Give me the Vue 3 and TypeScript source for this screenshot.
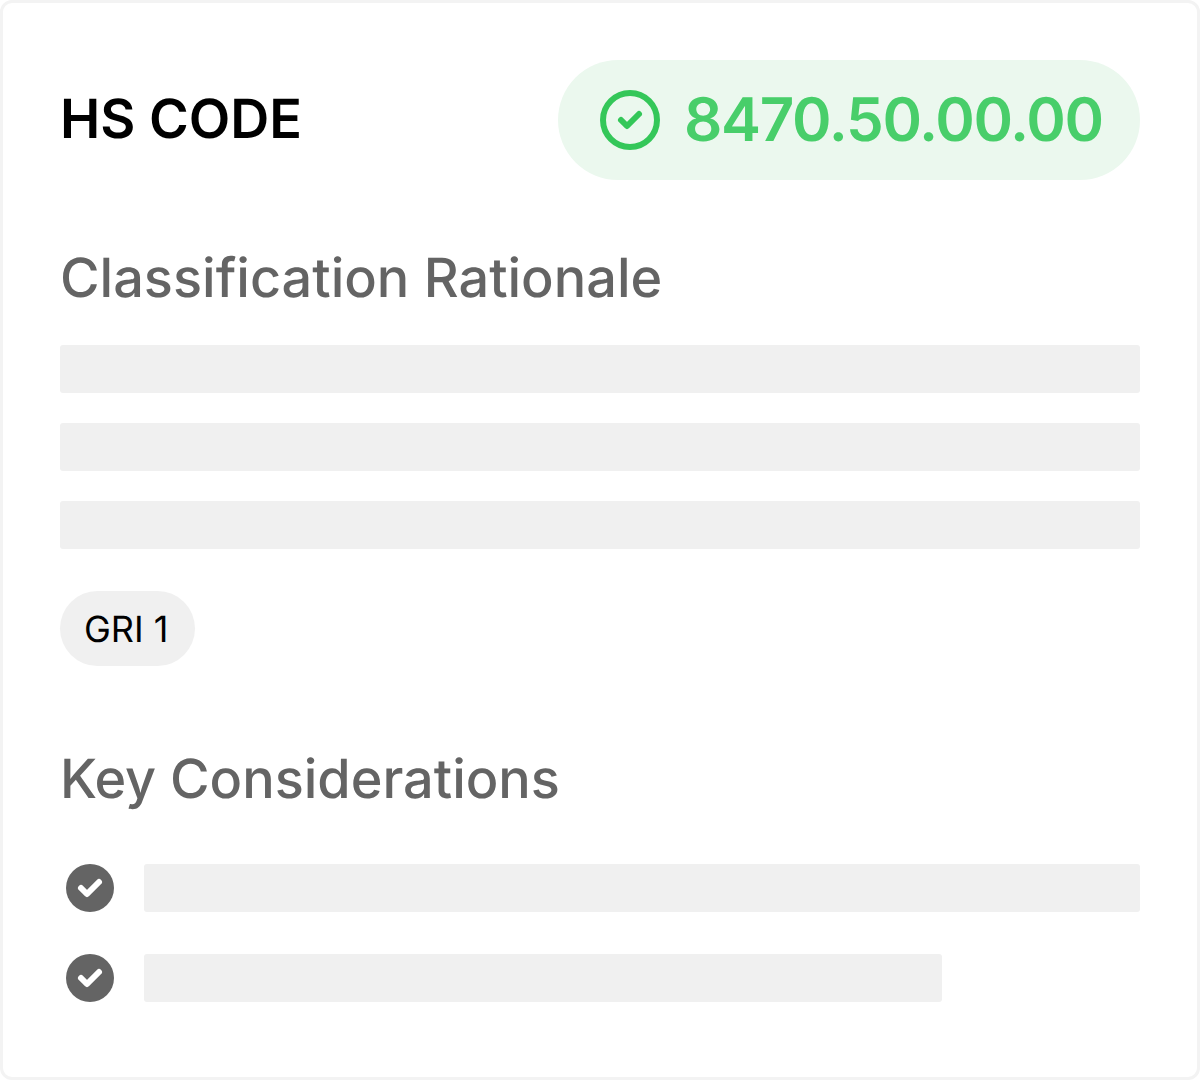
<script setup lang="ts">
const rationaleLines: number[] = [1080, 1080, 1080]
const considerations: number[] = [996, 798]
</script>

<template>
  <main class="card">
    <header class="head">
      <h1>HS CODE</h1>
      <div class="code">
        <svg width="60" height="60" viewBox="0 0 60 60" fill="none" stroke="#34c759">
          <circle cx="30" cy="30" r="27" stroke-width="6" />
          <path d="M21 30l6 6 12-12" stroke-width="6" stroke-linecap="round" stroke-linejoin="round" />
        </svg>
        <span>8470.50.00.00</span>
      </div>
    </header>
    <section class="rationale">
      <h2>Classification Rationale</h2>
      <div class="lines">
        <div v-for="(w, i) in rationaleLines" :key="i" class="bar" :style="{ width: w + 'px' }"></div>
      </div>
      <span class="tag">GRI 1</span>
    </section>
    <section class="key">
      <h2><span class="tight">Key</span> Considerations</h2>
      <ul>
        <li v-for="(w, i) in considerations" :key="i">
          <svg width="48" height="48" viewBox="0 0 48 48" fill="none">
            <circle cx="24" cy="24" r="24" fill="#646464" />
            <path d="M15 24l6 6 12-12" stroke="#fff" stroke-width="6" stroke-linecap="round" stroke-linejoin="round" />
          </svg>
          <div class="bar" :style="{ width: w + 'px' }"></div>
        </li>
      </ul>
    </section>
  </main>
</template>

<style>
body { margin: 0; background: #fff; }
</style>

<style scoped>
.card {
  box-sizing: border-box;
  width: 1200px;
  height: 1080px;
  padding: 57px;
  border: 3px solid #f3f3f3;
  border-radius: 12px;
  background: #fff;
  font-family: Inter, sans-serif;
  text-rendering: geometricPrecision;
}
.head { display: flex; justify-content: space-between; align-items: center; height: 120px; }
h1, h2 { margin: 0; white-space: nowrap; }
h1 { font-size: 54px; font-weight: 600; line-height: 66px; color: #000; }
h2 { font-size: 54px; font-weight: 500; line-height: 66px; color: #646464; }
.tight { letter-spacing: -0.4px; }
.code {
  box-sizing: border-box;
  display: flex;
  align-items: center;
  gap: 24px;
  width: 582px;
  height: 120px;
  padding-left: 42px;
  border-radius: 60px;
  background: #ebf8ee;
  color: #48ce6a;
  font-size: 60px;
  font-weight: 600;
  letter-spacing: -1.3px;
  white-space: nowrap;
}
.code svg { flex: none; }
.rationale { margin-top: 66px; }
.lines { display: flex; flex-direction: column; gap: 30px; margin-top: 33px; }
.bar { height: 48px; border-radius: 3px; background: #f0f0f0; }
.tag {
  box-sizing: border-box;
  display: flex;
  align-items: center;
  width: 135px;
  height: 75px;
  margin-top: 42px;
  padding-left: 24px;
  border-radius: 38px;
  background: #f0f0f0;
  font-size: 36px;
  white-space: nowrap;
  color: #000;
}
.key { margin-top: 81px; }
ul { display: flex; flex-direction: column; gap: 42px; margin: 51px 0 0; padding: 0 0 0 6px; list-style: none; }
li { display: flex; gap: 30px; }
</style>
